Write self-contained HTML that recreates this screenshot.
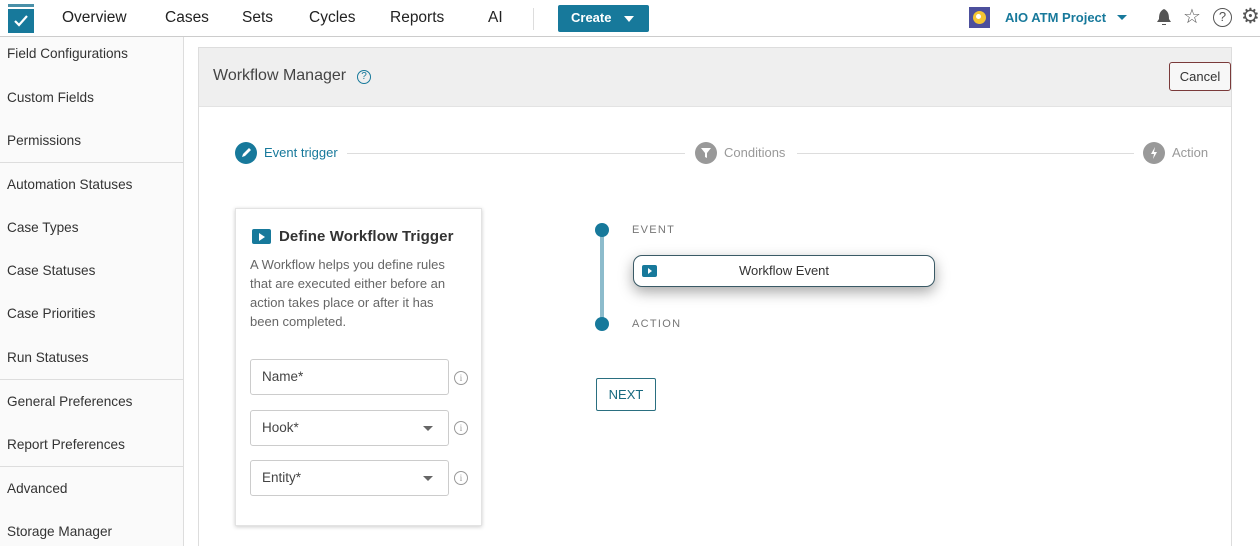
<!DOCTYPE html>
<html><head><style>
*{box-sizing:border-box;margin:0;padding:0}
body{width:1260px;height:546px;overflow:hidden;background:#fff;font-family:"Liberation Sans",sans-serif;color:#333;position:relative}
.abs{position:absolute}
.top{left:0;top:0;width:1260px;height:37px;border-bottom:1px solid #ccc;background:#fff}
.nav{top:9px;font-size:15.5px;color:#222}
.side{left:0;top:37px;width:184px;height:509px;background:#fafafa;border-right:1px solid #ddd}
.si{position:absolute;left:7px;font-size:13.6px;color:#333}
.hr{position:absolute;left:0;width:183px;height:1px;background:#ddd}
.lbl{font-size:11px;letter-spacing:1.3px;color:#777}
.inp{position:absolute;left:250px;width:199px;height:36px;border:1px solid #ccc;border-radius:3px;font-size:13.5px;color:#444;padding:9px 0 0 11px}
.car{position:absolute;right:15px;top:15px;border-left:5px solid transparent;border-right:5px solid transparent;border-top:5px solid #666}
.info{position:absolute;left:454px;width:14px;height:14px;border:1.2px solid #999;border-radius:50%;font-size:9px;color:#999;text-align:center;line-height:12px;font-family:"Liberation Serif",serif}
</style></head><body>
<div class="abs top"></div>
<div class="abs" style="left:8px;top:4px;width:26px;height:29px;">
<div style="position:absolute;left:0;top:0;width:26px;height:3px;background:#4a90a8"></div>
<div style="position:absolute;left:0;top:5px;width:26px;height:24px;background:#17799b"></div>
<svg style="position:absolute;left:5px;top:10px" width="16" height="14"><path d="M2 7 L6 11 L14 2" stroke="#fff" stroke-width="2.2" fill="none"/></svg></div>
<div class="abs nav" style="left:62px">Overview</div>
<div class="abs nav" style="left:165px">Cases</div>
<div class="abs nav" style="left:242px">Sets</div>
<div class="abs nav" style="left:309px">Cycles</div>
<div class="abs nav" style="left:390px">Reports</div>
<div class="abs nav" style="left:488px">AI</div>
<div class="abs" style="left:533px;top:8px;width:1px;height:22px;background:#ddd"></div>
<div class="abs" style="left:558px;top:5px;width:91px;height:27px;background:#17799b;border-radius:2px;color:#fff;font-size:13px;font-weight:bold;padding:5px 0 0 13px">Create<span style="position:absolute;left:66px;top:11px;border-left:5px solid transparent;border-right:5px solid transparent;border-top:6px solid #fff"></span></div>
<div class="abs" style="left:969px;top:7px;width:21px;height:21px;background:#4c4f9c"><div style="position:absolute;left:4px;top:4px;width:13px;height:13px;border-radius:50%;background:#f3c531"></div><div style="position:absolute;left:7px;top:7px;width:5px;height:5px;border-radius:50%;background:#fff"></div></div>
<div class="abs" style="left:1005px;top:10px;font-size:13px;color:#17799b;font-weight:bold">AIO ATM Project</div>
<div class="abs" style="left:1117px;top:15px;border-left:5px solid transparent;border-right:5px solid transparent;border-top:5px solid #17799b"></div>
<svg class="abs" style="left:1156px;top:8px" width="16" height="19"><path d="M8 1 C4 3 3 6 3 11 L1 14 L15 14 L13 11 C13 6 12 3 8 1Z M6 16 h4 v1 h-4z" fill="#555"/></svg>
<div class="abs" style="left:1183px;top:4px;font-size:20px;color:#555">☆</div>
<div class="abs" style="left:1213px;top:8px;width:19px;height:19px;border:1.6px solid #555;border-radius:50%;font-size:13px;text-align:center;line-height:16px;color:#555">?</div>
<div class="abs" style="left:1241px;top:4px;font-size:21px;color:#555">⚙</div>

<div class="abs side"></div>
<div class="si" style="top:46px">Field Configurations</div>
<div class="si" style="top:90px">Custom Fields</div>
<div class="si" style="top:133px">Permissions</div>
<div class="hr" style="top:162px"></div>
<div class="si" style="top:177px">Automation Statuses</div>
<div class="si" style="top:220px">Case Types</div>
<div class="si" style="top:263px">Case Statuses</div>
<div class="si" style="top:306px">Case Priorities</div>
<div class="si" style="top:350px">Run Statuses</div>
<div class="hr" style="top:379px"></div>
<div class="si" style="top:394px">General Preferences</div>
<div class="si" style="top:437px">Report Preferences</div>
<div class="hr" style="top:466px"></div>
<div class="si" style="top:481px">Advanced</div>
<div class="si" style="top:524px">Storage Manager</div>

<div class="abs" style="left:198px;top:47px;width:1034px;height:499px;border:1px solid #ddd;border-bottom:none;background:#fff"></div>
<div class="abs" style="left:199px;top:48px;width:1032px;height:59px;background:#efefef;border-bottom:1px solid #e3e3e3"></div>
<div class="abs" style="left:213px;top:67px;font-size:16px;color:#444">Workflow Manager</div>
<div class="abs" style="left:357px;top:70px;width:14px;height:14px;border:1.4px solid #17799b;border-radius:50%;font-size:10px;color:#17799b;text-align:center;line-height:12px">?</div>
<div class="abs" style="left:1169px;top:62px;width:62px;height:29px;border:1px solid #7a3a3a;border-radius:3px;font-size:13px;color:#333;text-align:center;line-height:27px;background:#f7f7f7">Cancel</div>

<div class="abs" style="left:347px;top:153px;width:338px;height:1px;background:#ddd"></div>
<div class="abs" style="left:797px;top:153px;width:337px;height:1px;background:#ddd"></div>
<div class="abs" style="left:235px;top:142px;width:22px;height:22px;border-radius:50%;background:#17799b"><svg width="22" height="22"><path d="M7 15 L8 12 L14 6 L16 8 L10 14Z" fill="#fff"/></svg></div>
<div class="abs" style="left:264px;top:145px;font-size:13px;color:#17799b">Event trigger</div>
<div class="abs" style="left:695px;top:142px;width:22px;height:22px;border-radius:50%;background:#999"><svg width="22" height="22"><path d="M6 6 H16 L12 11 V16 L10 15 V11Z" fill="#fff"/></svg></div>
<div class="abs" style="left:724px;top:145px;font-size:13px;color:#999">Conditions</div>
<div class="abs" style="left:1143px;top:142px;width:22px;height:22px;border-radius:50%;background:#999"><svg width="22" height="22"><path d="M12 5 L8 12 H11 L10 17 L14 10 H11Z" fill="#fff"/></svg></div>
<div class="abs" style="left:1172px;top:145px;font-size:13px;color:#999">Action</div>

<div class="abs" style="left:235px;top:208px;width:247px;height:318px;background:#fff;border:1px solid #e3e3e3;box-shadow:0 1px 4px rgba(0,0,0,.2)"></div>
<div class="abs" style="left:252px;top:229px;width:19px;height:15px;background:#17799b;border-radius:2px"><span style="position:absolute;left:7px;top:4px;border-top:4px solid transparent;border-bottom:4px solid transparent;border-left:6px solid #fff"></span></div>
<div class="abs" style="left:279px;top:228px;font-size:15px;color:#333;font-weight:bold;letter-spacing:.1px">Define Workflow Trigger</div>
<div class="abs" style="left:250px;top:255px;width:215px;font-size:13px;line-height:19px;color:#666">A Workflow helps you define rules that are executed either before an action takes place or after it has been completed.</div>
<div class="inp" style="top:359px">Name*</div>
<div class="info" style="top:371px">i</div>
<div class="inp" style="top:410px">Hook*<span class="car"></span></div>
<div class="info" style="top:421px">i</div>
<div class="inp" style="top:460px">Entity*<span class="car"></span></div>
<div class="info" style="top:471px">i</div>

<div class="abs" style="left:600px;top:230px;width:4px;height:94px;background:#8dbccc"></div>
<div class="abs" style="left:595px;top:223px;width:14px;height:14px;border-radius:50%;background:#17799b"></div>
<div class="abs" style="left:595px;top:317px;width:14px;height:14px;border-radius:50%;background:#17799b"></div>
<div class="abs lbl" style="left:632px;top:224px">EVENT</div>
<div class="abs lbl" style="left:632px;top:318px">ACTION</div>
<div class="abs" style="left:633px;top:255px;width:302px;height:32px;border:1.5px solid #3a5a66;border-radius:9px;box-shadow:0 5px 14px rgba(0,0,0,.35);background:#fff;font-size:13px;text-align:center;line-height:29px;color:#333">Workflow Event</div>
<div class="abs" style="left:642px;top:265px;width:15px;height:12px;background:#17799b;border-radius:2px"><span style="position:absolute;left:6px;top:3px;border-top:3px solid transparent;border-bottom:3px solid transparent;border-left:4px solid #fff"></span></div>
<div class="abs" style="left:596px;top:378px;width:60px;height:33px;border:1px solid #2a6f80;border-radius:2px;font-size:13px;color:#17697f;text-align:center;line-height:31px">NEXT</div>
</body></html>
